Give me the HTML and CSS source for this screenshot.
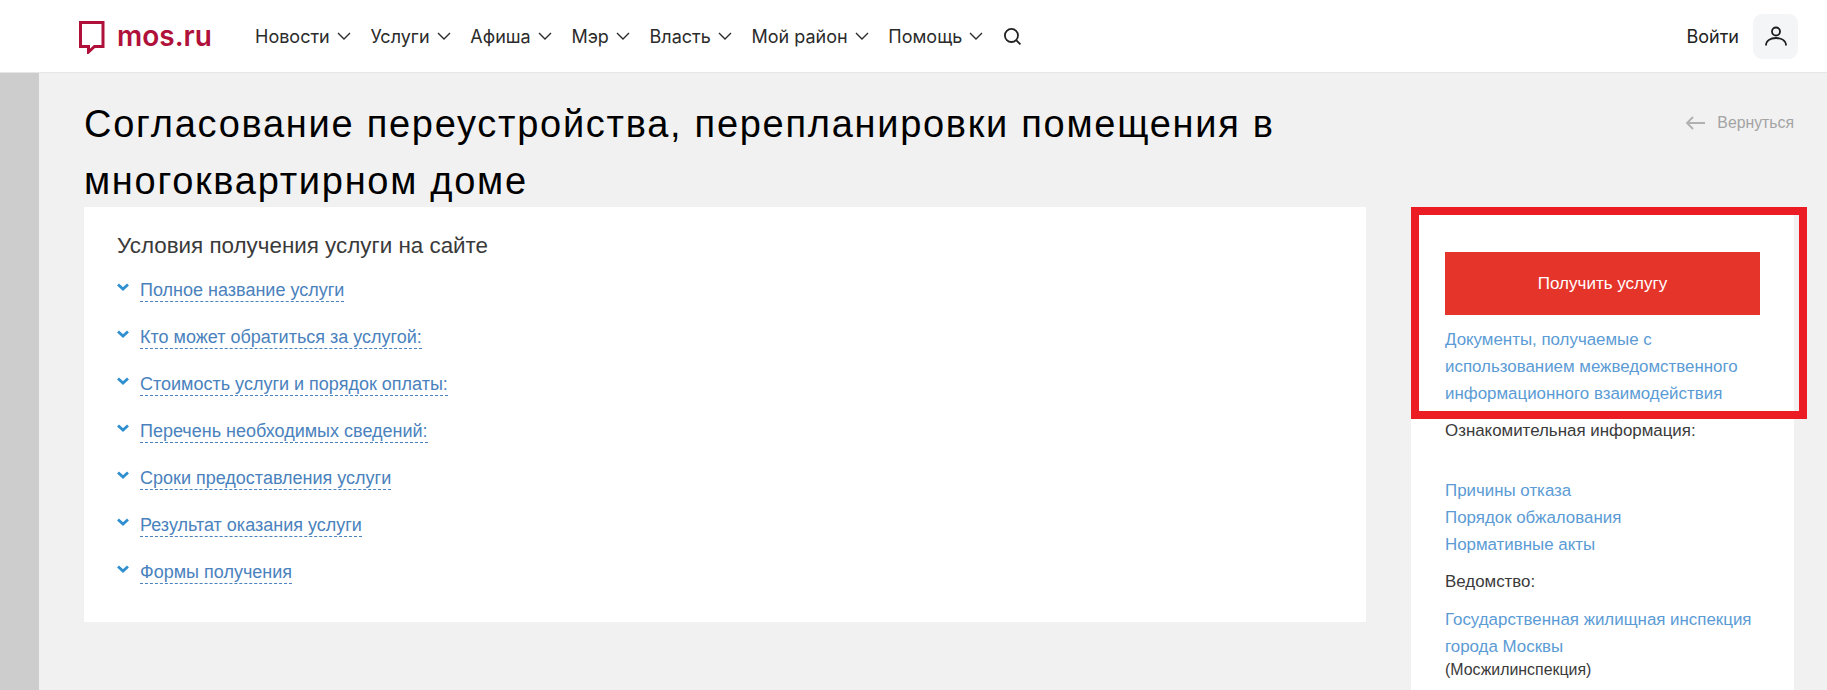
FILE: index.html
```html
<!DOCTYPE html>
<html lang="ru">
<head>
<meta charset="utf-8">
<title>Согласование переустройства</title>
<link rel="stylesheet" href="styles.css">
</head>
<body>
<header class="topbar">
  <a class="logo" href="#">
    <svg class="logo-icon" width="26" height="33" viewBox="0 0 26 33"><path d="M1.500 1.500H24V25.500H15.500L9.500 31V25.500H1.500Z" fill="none" stroke="#b0113a" stroke-width="3"/></svg>
    <span class="logo-text">mos.ru</span>
  </a>
  <nav class="nav">
    <a class="nav-item" href="#">Новости<svg class="caret" viewBox="0 0 14 8"><path d="M1 1l6 6 6-6"/></svg></a>
    <a class="nav-item" href="#">Услуги<svg class="caret" viewBox="0 0 14 8"><path d="M1 1l6 6 6-6"/></svg></a>
    <a class="nav-item" href="#">Афиша<svg class="caret" viewBox="0 0 14 8"><path d="M1 1l6 6 6-6"/></svg></a>
    <a class="nav-item" href="#">Мэр<svg class="caret" viewBox="0 0 14 8"><path d="M1 1l6 6 6-6"/></svg></a>
    <a class="nav-item" href="#">Власть<svg class="caret" viewBox="0 0 14 8"><path d="M1 1l6 6 6-6"/></svg></a>
    <a class="nav-item" href="#">Мой район<svg class="caret" viewBox="0 0 14 8"><path d="M1 1l6 6 6-6"/></svg></a>
    <a class="nav-item" href="#">Помощь<svg class="caret" viewBox="0 0 14 8"><path d="M1 1l6 6 6-6"/></svg></a>
    <svg class="search" width="19" height="19" viewBox="0 0 18 18"><circle cx="8" cy="8" r="6.2"/><path d="M12.500 12.500L16.500 16.500"/></svg>
  </nav>
  <div class="account">
    <span class="login">Войти</span>
    <span class="avatar"><svg width="22" height="22" viewBox="0 0 22 22"><circle cx="11" cy="6.500" r="4"/><path d="M1 20.500c0-5 4.500-7.500 10-7.500s10 2.500 10 7.500"/></svg></span>
  </div>
</header>
<div class="page">
  <div class="strip"></div>
  <main class="content">
    <div class="title-row">
      <h1 class="title">Согласование переустройства, перепланировки помещения в многоквартирном доме</h1>
      <a class="back" href="#"><svg width="21" height="14" viewBox="0 0 21 14"><path d="M20 7H2M8 1L2 7l6 6"/></svg>Вернуться</a>
    </div>
    <div class="columns">
      <section class="card">
        <h2 class="card-title">Условия получения услуги на сайте</h2>
        <ul class="acc">
          <li class="acc-item"><svg class="chev" viewBox="0 0 12 8"><path d="M1 1.500l5 4.500 5-4.500"/></svg><a class="acc-link" href="#">Полное название услуги</a></li>
          <li class="acc-item"><svg class="chev" viewBox="0 0 12 8"><path d="M1 1.500l5 4.500 5-4.500"/></svg><a class="acc-link" href="#">Кто может обратиться за услугой:</a></li>
          <li class="acc-item"><svg class="chev" viewBox="0 0 12 8"><path d="M1 1.500l5 4.500 5-4.500"/></svg><a class="acc-link" href="#">Стоимость услуги и порядок оплаты:</a></li>
          <li class="acc-item"><svg class="chev" viewBox="0 0 12 8"><path d="M1 1.500l5 4.500 5-4.500"/></svg><a class="acc-link" href="#">Перечень необходимых сведений:</a></li>
          <li class="acc-item"><svg class="chev" viewBox="0 0 12 8"><path d="M1 1.500l5 4.500 5-4.500"/></svg><a class="acc-link" href="#">Сроки предоставления услуги</a></li>
          <li class="acc-item"><svg class="chev" viewBox="0 0 12 8"><path d="M1 1.500l5 4.500 5-4.500"/></svg><a class="acc-link" href="#">Результат оказания услуги</a></li>
          <li class="acc-item"><svg class="chev" viewBox="0 0 12 8"><path d="M1 1.500l5 4.500 5-4.500"/></svg><a class="acc-link" href="#">Формы получения</a></li>
        </ul>
      </section>
      <aside class="side">
        <div class="frame"></div>
        <a class="cta" href="#">Получить услугу</a>
        <a class="side-link docs" href="#">Документы, получаемые с использованием межведомственного информационного взаимодействия</a>
        <p class="side-label info">Ознакомительная информация:</p>
        <ul class="side-list">
          <li><a class="side-link" href="#">Причины отказа</a></li>
          <li><a class="side-link" href="#">Порядок обжалования</a></li>
          <li><a class="side-link" href="#">Нормативные акты</a></li>
        </ul>
        <p class="side-label dept">Ведомство:</p>
        <a class="side-link org" href="#">Государственная жилищная инспекция города Москвы</a>
        <p class="side-label short">(Мосжилинспекция)</p>
      </aside>
    </div>
  </main>
</div>
</body>
</html>
```
FILE: styles.css
```css
* { box-sizing: border-box; }
html, body { margin: 0; height: 100%; overflow: hidden; }
body { background: #f1f1f1; font-family: "Liberation Sans", Arial, sans-serif; color: #333; }
a { text-decoration: none; }
ul { list-style: none; margin: 0; padding: 0; }
p { margin: 0; }

.topbar { height: 73px; background: #fff; border-bottom: 1px solid #e6e6e6; display: flex; align-items: center; padding: 0 29px 0 79px; font-family: Inter, "Liberation Sans", sans-serif; }
.logo { display: flex; align-items: center; gap: 12px; width: 176px; }
.logo-icon { flex: none; margin-top: 3px; }
.logo-text { font-size: 28px; font-weight: 600; color: #b0113a; letter-spacing: 0; }
.nav { display: flex; align-items: center; gap: 19.7px; }
.nav-item { display: flex; align-items: center; gap: 7px; font-size: 18px; color: #2b2b2b; }
.caret { width: 14px; height: 8px; fill: none; stroke: #2b2b2b; stroke-width: 1.4; }
.search { fill: none; stroke: #222; stroke-width: 1.7; }
.account { margin-left: auto; display: flex; align-items: center; gap: 14px; }
.login { font-size: 18px; color: #222; }
.avatar { width: 45px; height: 45px; border-radius: 9px; background: #f4f5f7; display: flex; align-items: center; justify-content: center; }
.avatar svg { fill: none; stroke: #1c1c1c; stroke-width: 1.8; }

.page { display: flex; height: calc(100% - 73px); }
.strip { width: 39px; flex: none; background: #cdcdcd; }
.content { flex: 1; padding: 0 33px 0 45px; min-width: 0; }
.title-row { display: flex; justify-content: space-between; align-items: flex-start; }
.title { margin: 23px 0 -3px; width: 1260px; font-size: 38px; font-weight: 400; line-height: 57px; letter-spacing: 1.72px; color: #000; }
.back { display: flex; align-items: center; gap: 11px; margin-top: 41px; font-size: 15.8px; color: #a3a3a3; }
.back svg { fill: none; stroke: #b0b0b0; stroke-width: 1.8; }

.columns { display: flex; align-items: flex-start; }
.card { width: 1282px; height: 415px; background: #fff; padding: 25px 33px; }
.card-title { margin: 0 0 12px; font-size: 22.4px; font-weight: 400; line-height: 27px; color: #3a3a3a; }
.acc-item { height: 47px; display: flex; align-items: flex-start; gap: 11px; padding-top: 9px; }
.chev { width: 12px; height: 8px; margin-top: 3px; flex: none; fill: none; stroke: #2f8fd0; stroke-width: 2.8; }
.acc-link { font-size: 18px; line-height: 21px; color: #4a82bd; border-bottom: 1px dashed #4a82bd; }

.side { position: relative; margin-left: 45px; width: 383px; height: 500px; background: #fff; padding: 45px 34px 0; }
.frame { position: absolute; left: 0; top: 0; width: 396px; height: 212px; border: 8px solid #ec1c24; }
.cta { display: flex; align-items: center; justify-content: center; width: 315px; height: 63px; background: #e5352b; color: #fff; font-size: 17px; }
.side-link { color: #5b9bd5; font-size: 16.9px; line-height: 27px; }
.docs { display: block; margin-top: 11px; }
.side-label { font-size: 16.9px; line-height: 20px; color: #3a3a3a; }
.info { margin-top: 14px; }
.side-list { margin-top: 36px; }
.side-list li { height: 27px; }
.dept { margin-top: 14px; }
.org { display: block; margin-top: 14px; }
.short { font-size: 15.9px; line-height: 20px; }
```
